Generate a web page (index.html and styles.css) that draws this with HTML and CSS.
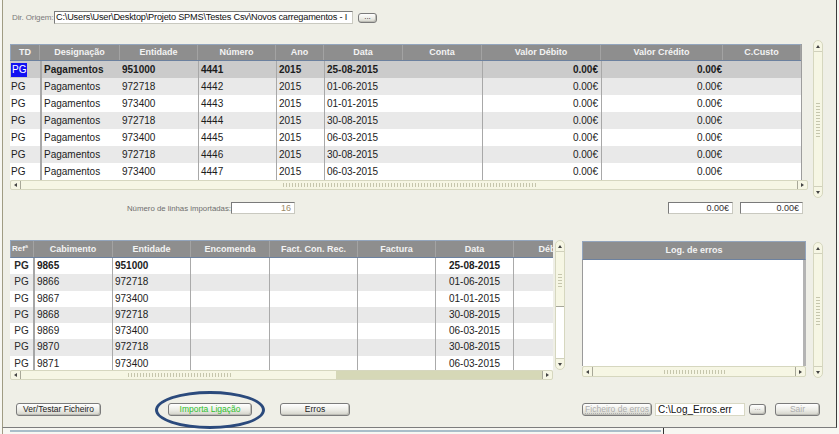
FILE: index.html
```html
<!DOCTYPE html>
<html lang="pt">
<head>
<meta charset="utf-8">
<title>Importação</title>
<link rel="stylesheet" href="styles.css">
</head>
<body>
<div class="window">
  <div class="dir-row">
    <span class="dir-label">Dir. Origem:</span>
    <div class="field path">C:\Users\User\Desktop\Projeto SPMS\Testes Csv\Novos carregamentos - I</div>
    <div class="btn dots">...</div>
  </div>

  <div class="top-section">
    <div class="gridwrap top-wrap">
      <div class="tbl top-tbl">
        <div class="hrow top-cols">
          <div>TD</div><div>Designação</div><div>Entidade</div><div>Número</div><div>Ano</div><div>Data</div><div>Conta</div><div>Valor Débito</div><div>Valor Crédito</div><div>C.Custo</div>
        </div>
        <div class="row top-cols sel">
          <div class="c1"><span class="hl">PG</span></div><div class="c2">Pagamentos</div><div class="c3">951000</div><div class="c4">4441</div><div class="c5">2015</div><div class="c6">25-08-2015</div><div class="c7"></div><div class="c8">0.00€</div><div class="c9">0.00€</div><div class="c10"></div>
        </div>
        <div class="row top-cols alt">
          <div class="c1">PG</div><div class="c2">Pagamentos</div><div class="c3">972718</div><div class="c4">4442</div><div class="c5">2015</div><div class="c6">01-06-2015</div><div class="c7"></div><div class="c8">0.00€</div><div class="c9">0.00€</div><div class="c10"></div>
        </div>
        <div class="row top-cols">
          <div class="c1">PG</div><div class="c2">Pagamentos</div><div class="c3">973400</div><div class="c4">4443</div><div class="c5">2015</div><div class="c6">01-01-2015</div><div class="c7"></div><div class="c8">0.00€</div><div class="c9">0.00€</div><div class="c10"></div>
        </div>
        <div class="row top-cols alt">
          <div class="c1">PG</div><div class="c2">Pagamentos</div><div class="c3">972718</div><div class="c4">4444</div><div class="c5">2015</div><div class="c6">30-08-2015</div><div class="c7"></div><div class="c8">0.00€</div><div class="c9">0.00€</div><div class="c10"></div>
        </div>
        <div class="row top-cols">
          <div class="c1">PG</div><div class="c2">Pagamentos</div><div class="c3">973400</div><div class="c4">4445</div><div class="c5">2015</div><div class="c6">06-03-2015</div><div class="c7"></div><div class="c8">0.00€</div><div class="c9">0.00€</div><div class="c10"></div>
        </div>
        <div class="row top-cols alt">
          <div class="c1">PG</div><div class="c2">Pagamentos</div><div class="c3">972718</div><div class="c4">4446</div><div class="c5">2015</div><div class="c6">30-08-2015</div><div class="c7"></div><div class="c8">0.00€</div><div class="c9">0.00€</div><div class="c10"></div>
        </div>
        <div class="row top-cols">
          <div class="c1">PG</div><div class="c2">Pagamentos</div><div class="c3">973400</div><div class="c4">4447</div><div class="c5">2015</div><div class="c6">06-03-2015</div><div class="c7"></div><div class="c8">0.00€</div><div class="c9">0.00€</div><div class="c10"></div>
        </div>
      </div>
      <div class="hscroll top-h">
        <div class="arr left"><i></i></div>
        <div class="hthumb full"><span class="hgrip g-top"></span></div>
        <div class="arr right"><i></i></div>
      </div>
    </div>
    <div class="vscroll top-v">
      <div class="varr up"><i></i></div>
      <div class="vthumb grow"><span class="vgrip g-topv"></span></div>
      <div class="varr down"><i></i></div>
    </div>
  </div>

  <div class="mid-row">
    <span class="mid-label">Número de linhas importadas:</span>
    <div class="field num count">16</div>
    <div class="field num tot1">0.00€</div>
    <div class="field num tot2">0.00€</div>
  </div>

  <div class="bottom-section">
    <div class="gridwrap bot-wrap">
      <div class="tbl bot-tbl">
        <div class="hrow bot-cols">
          <div class="ref-h">Refª</div><div>Cabimento</div><div>Entidade</div><div>Encomenda</div><div>Fact. Con. Rec.</div><div>Factura</div><div>Data</div><div>Débito</div>
        </div>
        <div class="row bot-cols bold">
          <div class="b1">PG</div><div class="b2">9865</div><div class="b3">951000</div><div class="b4"></div><div class="b5"></div><div class="b6"></div><div class="b7">25-08-2015</div><div class="b8"></div>
        </div>
        <div class="row bot-cols alt">
          <div class="b1">PG</div><div class="b2">9866</div><div class="b3">972718</div><div class="b4"></div><div class="b5"></div><div class="b6"></div><div class="b7">01-06-2015</div><div class="b8"></div>
        </div>
        <div class="row bot-cols">
          <div class="b1">PG</div><div class="b2">9867</div><div class="b3">973400</div><div class="b4"></div><div class="b5"></div><div class="b6"></div><div class="b7">01-01-2015</div><div class="b8"></div>
        </div>
        <div class="row bot-cols alt">
          <div class="b1">PG</div><div class="b2">9868</div><div class="b3">972718</div><div class="b4"></div><div class="b5"></div><div class="b6"></div><div class="b7">30-08-2015</div><div class="b8"></div>
        </div>
        <div class="row bot-cols">
          <div class="b1">PG</div><div class="b2">9869</div><div class="b3">973400</div><div class="b4"></div><div class="b5"></div><div class="b6"></div><div class="b7">06-03-2015</div><div class="b8"></div>
        </div>
        <div class="row bot-cols alt">
          <div class="b1">PG</div><div class="b2">9870</div><div class="b3">972718</div><div class="b4"></div><div class="b5"></div><div class="b6"></div><div class="b7">30-08-2015</div><div class="b8"></div>
        </div>
        <div class="row bot-cols">
          <div class="b1">PG</div><div class="b2">9871</div><div class="b3">973400</div><div class="b4"></div><div class="b5"></div><div class="b6"></div><div class="b7">06-03-2015</div><div class="b8"></div>
        </div>
      </div>
      <div class="hscroll bot-h">
        <div class="arr left"><i></i></div>
        <div class="hthumb part"><span class="hgrip g-bot"></span></div>
        <div class="htrack"></div>
        <div class="arr right"><i></i></div>
      </div>
    </div>
    <div class="vscroll bot-v">
      <div class="varr up"><i></i></div>
      <div class="vthumb part-v"><span class="vgrip g-botv"></span></div>
      <div class="vtrack"></div>
      <div class="varr down"><i></i></div>
    </div>

    <div class="log-panel">
      <div class="log-head">Log. de erros</div>
      <div class="log-body"></div>
      <div class="hscroll log-h">
        <div class="arr left"><i></i></div>
        <div class="hthumb full"><span class="hgrip g-log"></span></div>
        <div class="arr right"><i></i></div>
      </div>
    </div>
    <div class="vscroll log-v">
      <div class="varr up"><i></i></div>
      <div class="vthumb grow"><span class="vgrip g-logv"></span></div>
      <div class="varr down"><i></i></div>
    </div>
  </div>

  <div class="button-row">
    <div class="btn b-ver">Ver/Testar Ficheiro</div>
    <div class="btn b-imp">Importa Ligação</div>
    <div class="btn b-err">Erros</div>
    <div class="btn b-fich disabled">Ficheiro de erros</div>
    <div class="field logpath">C:\Log_Erros.err</div>
    <div class="btn dots2">...</div>
    <div class="btn b-sair disabled">Sair</div>
  </div>

  <div class="highlight-ring"></div>
</div>
<div class="strip">
  <div class="strip-line"></div>
  <div class="strip-v"></div>
</div>
</body>
</html>
```

FILE: styles.css
```css
html, body {
  margin: 0;
  padding: 0;
  background: #f7f7f2;
  font-family: "Liberation Sans", Arial, sans-serif;
}

.window {
  position: relative;
  box-sizing: border-box;
  margin-left: 2px;
  width: 835px;
  height: 428px;
  background: #efefe7;
  border-left: 1px solid #a09c84;
  border-right: 1px solid #3c3c3c;
  border-bottom: 1px solid #7d7d7d;
  padding-left: 7px;
}

/* ---------- Dir row ---------- */
.dir-row {
  display: flex;
  align-items: center;
  padding-top: 11px;
  height: 13px;
}
.dir-label {
  margin-left: 2px;
  width: 42px;
  font-size: 8px;
  letter-spacing: -0.1px;
  color: #7b7b7b;
  white-space: nowrap;
  overflow: hidden;
}
.field {
  box-sizing: border-box;
  background: #fff;
  border: 1px solid #c9c9c0;
  border-top-color: #7a7a7a;
  border-left-color: #7a7a7a;
  white-space: nowrap;
  overflow: hidden;
}
.path {
  width: 299px;
  height: 13px;
  font-size: 9.2px;
  letter-spacing: -0.2px;
  line-height: 11px;
  padding-left: 1px;
  color: #111;
}
.btn {
  box-sizing: border-box;
  height: 13px;
  border: 1px solid #7b7b7b;
  border-radius: 3px;
  background: linear-gradient(#ffffff, #ecece6 55%, #d2d2c9);
  box-shadow: inset -1px -1px 0 #bdbdb6;
  font-size: 8.5px;
  line-height: 11px;
  text-align: center;
  color: #222;
  white-space: nowrap;
  overflow: hidden;
}
.dots {
  margin-left: 5px;
  width: 19px;
  height: 10px;
  font-size: 8px;
  line-height: 5px;
}

/* ---------- Top grid ---------- */
.top-section {
  display: flex;
  margin-top: 16px;
  height: 158px;
}
.top-wrap {
  margin-top: 4px;
  width: 798px;
}
.tbl {
  overflow: hidden;
}
.top-tbl {
  width: 792px;
  border-right: 1px solid #9d9d9d;
  box-sizing: border-box;
}
.top-cols {
  display: grid;
  grid-template-columns: 30px 80px 78px 78px 48px 79px 79px 119px 122px 78px;
}
.hrow {
  box-sizing: border-box;
  height: 17px;
  background: #8e8e8e;
  border-top: 1px solid #93a5bd;
  border-bottom: 1px solid #6c819f;
}
.hrow > div {
  box-sizing: border-box;
  border-right: 1px solid #a3a3a3;
  color: #f3f3f3;
  font-weight: bold;
  font-size: 9px;
  line-height: 15px;
  text-align: center;
  white-space: nowrap;
  overflow: hidden;
}
.top-cols.hrow > div:first-child {
  border-left: 1px solid #93a5bd;
}
.row {
  height: 17px;
  background: #fff;
  font-size: 10px;
  line-height: 17px;
  color: #1c1c1c;
}
.row.alt { background: #e9e9e9; }
.row.sel { background: #cbcbcb; font-weight: bold; }
.row > div {
  box-sizing: border-box;
  padding-left: 2px;
  white-space: nowrap;
  overflow: hidden;
}
.c1 { padding-left: 1px !important; }
.c2, .c4, .c5, .c6, .c8, .c9 { border-left: 1px solid #a8a8a8; }
.c2 { border-left-width: 2px !important; }
.c8, .c9 { text-align: right; padding-right: 3px; }
.c9 { padding-right: 1px; }
.hl {
  display: inline-block;
  background: #1212f2;
  color: #fff;
  font-weight: normal;
  line-height: 14px;
  padding: 0 1px;
}

/* ---------- Scrollbars ---------- */
.hscroll {
  box-sizing: border-box;
  display: flex;
  height: 10px;
  background: #f6f6e4;
  border: 1px solid #d6d7bf;
  border-radius: 2px;
}
.arr {
  width: 9px;
  display: flex;
  align-items: center;
  justify-content: center;
}
.arr.left { border-right: 1px solid #a8a898; }
.arr.right { border-left: 1px solid #a8a898; }
.arr i {
  width: 0;
  height: 0;
  border-style: solid;
}
.arr.left i { border-width: 2px 3px 2px 0; border-color: transparent #444 transparent transparent; }
.arr.right i { border-width: 2px 0 2px 3px; border-color: transparent transparent transparent #444; }
.hthumb {
  display: flex;
  align-items: center;
  justify-content: center;
}
.hthumb.full { flex: 1; }
.hgrip {
  height: 4px;
  background: repeating-linear-gradient(90deg, transparent 0 2px, #c6c6ad 2px 3px);
}
.g-top { width: 257px; }
.g-bot { width: 105px; }
.g-log { width: 65px; }
.htrack {
  flex: 1;
  background: #d6d8b7;
}
.hthumb.part { width: 315px; }

.vscroll {
  box-sizing: border-box;
  display: flex;
  flex-direction: column;
  width: 10px;
  background: #f6f6e4;
  border: 1px solid #d6d7bf;
  border-radius: 5px;
}
.varr {
  height: 10px;
  display: flex;
  align-items: center;
  justify-content: center;
  flex: none;
}
.varr.up { border-bottom: 1px solid #d0d0bc; }
.varr.down { border-top: 1px solid #d0d0bc; }
.varr i { width: 0; height: 0; border-style: solid; }
.varr.up i { border-width: 0 2px 3px 2px; border-color: transparent transparent #444 transparent; }
.varr.down i { border-width: 3px 2px 0 2px; border-color: #444 transparent transparent transparent; }
.vthumb {
  display: flex;
  align-items: center;
  justify-content: center;
}
.vthumb.grow { flex: 1; }
.vgrip {
  width: 4px;
  background: repeating-linear-gradient(180deg, transparent 0 2px, #c6c6ad 2px 3px);
}
.g-topv { height: 37px; }
.g-botv { height: 15px; }
.g-logv { height: 30px; }
.vthumb.part-v { height: 54px; border-bottom: 1px solid #a7a79a; }
.vtrack { flex: 1; background: #fff; }

.top-v {
  margin-left: 5px;
  height: 158px;
}

/* ---------- Middle row ---------- */
.mid-row {
  display: flex;
  align-items: center;
  margin-top: 4px;
  height: 12px;
}
.mid-label {
  width: 221px;
  text-align: right;
  font-size: 7.8px;
  color: #6e6e6e;
  white-space: nowrap;
}
.num {
  height: 12px;
  text-align: right;
  font-size: 9px;
  line-height: 10px;
  padding-right: 3px;
  color: #333;
}
.count { width: 64px; color: #9c8a68; }
.tot1 { margin-left: 373px; width: 65px; }
.tot2 { margin-left: 7px; width: 63px; }

/* ---------- Bottom section ---------- */
.bottom-section {
  display: flex;
  align-items: flex-start;
  margin-top: 26px;
  height: 140px;
}
.bot-wrap { width: 543px; }
.bot-tbl { height: 130px; }
.bot-cols {
  display: grid;
  grid-template-columns: 23px 79px 78px 79px 88px 78px 78px 78px;
  width: 601px;
}
.bot-cols.hrow { height: 18px; border-left: 1px solid #93a5bd; }
.bot-cols.hrow > div { line-height: 16px; }
.bot-cols.hrow > div.ref-h { font-size: 8px; overflow: visible; text-align: left; padding-left: 1px; }
.row.bot-cols { height: 16.3px; line-height: 16.3px; }
.row.bold { font-weight: bold; }
.b1 { text-align: center; padding-left: 0 !important; color: #2a2a2a; }
.b2 { border-left: 2px solid #a6a6a6; }
.b3, .b4, .b5, .b6, .b7, .b8 { border-left: 1px solid #aaaaaa; }
.b7 { text-align: center; padding-left: 0 !important; }
.bot-h { width: 543px; }

.bot-v {
  margin-left: 2px;
  height: 130px;
}

.log-panel {
  margin-left: 17px;
  margin-top: 1px;
  width: 224px;
  display: flex;
  flex-direction: column;
}
.log-head {
  box-sizing: border-box;
  height: 19px;
  background: #8e8e8e;
  border: 1px solid #93a5bd;
  border-bottom-color: #6c819f;
  color: #f3f3f3;
  font-weight: bold;
  font-size: 9px;
  line-height: 17px;
  text-align: center;
}
.log-body {
  box-sizing: border-box;
  height: 106px;
  background: #fff;
  border-left: 1px solid #9a9a9a;
  border-right: 3px solid #b4b4b4;
}
.log-h { height: 11px; }
.log-v {
  margin-left: 7px;
  margin-top: 2px;
  height: 136px;
}

/* ---------- Buttons ---------- */
.button-row {
  display: flex;
  align-items: center;
  margin-top: 23px;
  height: 13px;
}
.b-ver { margin-left: 6px; width: 85px; }
.b-imp { margin-left: 67px; width: 84px; color: #2ebf2e; }
.b-err { margin-left: 28px; width: 70px; }
.b-fich { margin-left: 232px; width: 70px; }
.disabled { color: #adadad; }
.b-fich { text-decoration: underline dotted #b0b0b0; }
.logpath {
  margin-left: 3px;
  width: 90px;
  height: 13px;
  font-size: 10px;
  line-height: 11px;
  padding-left: 2px;
  color: #111;
  border-color: #d8d8c4;
}
.dots2 {
  margin-left: 4px;
  width: 17px;
  height: 11px;
  font-size: 8px;
  line-height: 6px;
  color: #9a9a9a;
}
.b-sair { margin-left: 9px; width: 45px; }

.highlight-ring {
  position: absolute;
  left: 152px;
  top: 391px;
  width: 110px;
  height: 38px;
  box-sizing: border-box;
  border: 3px solid #2b4a7c;
  border-radius: 50%;
}

/* ---------- Strip below ---------- */
.strip {
  display: flex;
  margin-left: 2px;
  height: 6px;
  border-left: 1px solid #a09c84;
}
.strip-line {
  margin-left: 7px;
  margin-top: 2px;
  width: 651px;
  height: 2px;
  background: #a9bdc9;
}
.strip-v {
  margin-left: 2px;
  width: 1px;
  height: 6px;
  background: #333;
}
```
